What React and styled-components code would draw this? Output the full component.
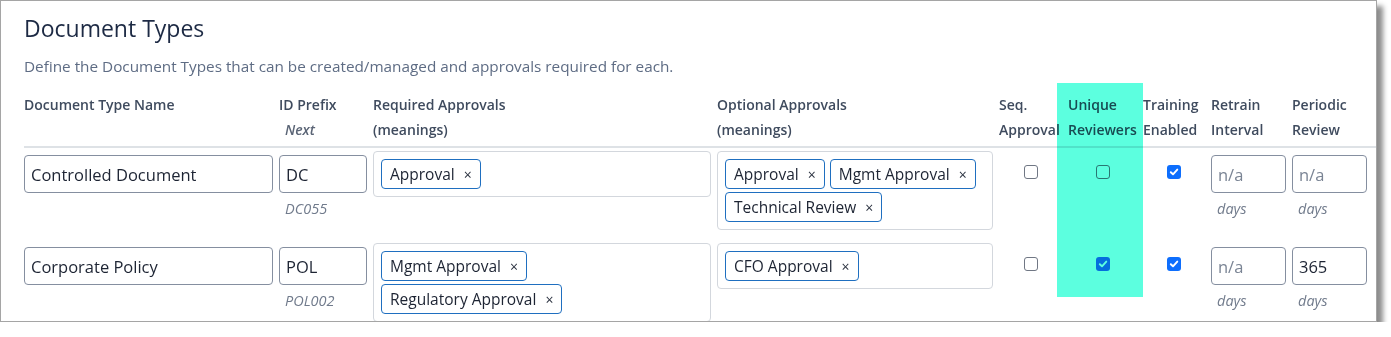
import React from "react";
import styled, { createGlobalStyle } from "styled-components";

const GlobalStyle = createGlobalStyle`
  body {
    margin: 0;
    background: #ffffff;
    font-family: "Open Sans", "Noto Sans", sans-serif;
  }
`;

const COLUMNS = "249px 88px 338px 276px 63px 69px 62px 75px 75px";

const Frame = styled.div`
  position: relative;
  box-sizing: border-box;
  width: 1377px;
  height: 322px;
  padding: 0 0 0 23px;
  border: 1px solid #a5a5a5;
  background: #ffffff;
  box-shadow: 6px 6px 5px rgba(0, 0, 0, 0.45);
  overflow: hidden;
`;

const Title = styled.h2`
  margin: 0;
  padding-top: 12px;
  font-size: 23px;
  font-weight: 400;
  line-height: 30px;
  color: #1d2a44;
`;

const Subtitle = styled.p`
  margin: 12px 0 0;
  font-size: 15.3px;
  line-height: 22px;
  color: #5e6c84;
`;

const HeaderGrid = styled.div`
  display: grid;
  grid-template-columns: ${COLUMNS};
  column-gap: 6px;
  margin-top: 15px;
  padding-bottom: 4px;
  border-bottom: 2px solid #dee2e6;
`;

const HeaderCell = styled.div`
  font-size: 14px;
  font-weight: 600;
  line-height: 25px;
  color: #3f4b5e;
  white-space: nowrap;
`;

const HeaderNote = styled.div`
  padding-left: 6px;
  font-style: italic;
  color: #5b6576;
`;

const Row = styled.div`
  display: grid;
  grid-template-columns: ${COLUMNS};
  column-gap: 6px;
  align-items: start;
  padding: 3px 0 10px;
`;

const Cell = styled.div`
  display: flex;
  flex-direction: column;
  align-items: ${(p) => (p.$center ? "center" : "stretch")};
  padding-top: ${(p) => (p.$center ? "14px" : "4px")};
`;

const TextInput = styled.input`
  box-sizing: border-box;
  width: 100%;
  height: 38px;
  margin: 0;
  padding: 0 6px;
  border: 1px solid #858fa0;
  border-radius: 4px;
  font-family: inherit;
  font-size: 16.5px;
  color: #1d2433;
  background: #ffffff;
  outline: none;

  &::placeholder {
    color: #7a8494;
  }
`;

const Hint = styled.div`
  padding-left: 6px;
  margin-top: 4px;
  font-size: 14.5px;
  font-style: italic;
  line-height: 24px;
  color: #717b8c;
`;

const TagBox = styled.div`
  display: flex;
  flex-wrap: wrap;
  gap: 3px 5px;
  align-content: flex-start;
  box-sizing: border-box;
  padding: 7px;
  border: 1px solid #d3d7dd;
  border-radius: 4px;
  background: #ffffff;
`;

const Tag = styled.span`
  display: inline-flex;
  align-items: center;
  box-sizing: border-box;
  height: 30px;
  padding: 0 8px;
  border: 1px solid #1f6fc0;
  border-radius: 4px;
  font-size: 15.5px;
  color: #1d2433;
  white-space: nowrap;
`;

const Remove = styled.span`
  margin-left: 9px;
  font-size: 14px;
  color: #2b3240;
`;

const Box = styled.span`
  box-sizing: border-box;
  display: inline-flex;
  align-items: center;
  justify-content: center;
  width: 14px;
  height: 14px;
  border-radius: 3px;
  border: ${(p) => (p.$checked ? "none" : "1px solid #707784")};
  background: ${(p) => (p.$checked ? "#0d6efd" : "#ffffff")};
`;

const Highlight = styled.div`
  position: absolute;
  left: 1056px;
  top: 82px;
  width: 86px;
  height: 214px;
  background: #5cffdf;
  mix-blend-mode: multiply;
  pointer-events: none;
`;

const Checkbox = ({ checked }) => (
  <Box $checked={checked}>
    {checked && (
      <svg width="10" height="10" viewBox="0 0 10 10">
        <path d="M1.8 5.2 L4 7.3 L8.3 2.6" fill="none" stroke="#ffffff" strokeWidth="1.9" strokeLinecap="round" strokeLinejoin="round" />
      </svg>
    )}
  </Box>
);

const headers = [
  ["Document Type Name"],
  ["ID Prefix", "Next"],
  ["Required Approvals", "(meanings)"],
  ["Optional Approvals", "(meanings)"],
  ["Seq.", "Approval"],
  ["Unique", "Reviewers"],
  ["Training", "Enabled"],
  ["Retrain", "Interval"],
  ["Periodic", "Review"],
];

const docTypes = [
  {
    name: "Controlled Document",
    prefix: "DC",
    next: "DC055",
    required: ["Approval"],
    optional: ["Approval", "Mgmt Approval", "Technical Review"],
    seq: false,
    unique: false,
    training: true,
    retrain: "",
    review: "",
  },
  {
    name: "Corporate Policy",
    prefix: "POL",
    next: "POL002",
    required: ["Mgmt Approval", "Regulatory Approval"],
    optional: ["CFO Approval"],
    seq: false,
    unique: true,
    training: true,
    retrain: "",
    review: "365",
  },
];

const Tags = ({ items }) => (
  <TagBox>
    {items.map((t) => (
      <Tag key={t}>
        {t}
        <Remove>×</Remove>
      </Tag>
    ))}
  </TagBox>
);

export default function App() {
  return (
    <>
      <GlobalStyle />
      <Frame>
        <Title>Document Types</Title>
        <Subtitle>Define the Document Types that can be created/managed and approvals required for each.</Subtitle>
        <HeaderGrid>
          {headers.map(([top, bottom], i) => (
            <HeaderCell key={top}>
              <div>{top}</div>
              {i === 1 ? <HeaderNote>{bottom}</HeaderNote> : <div>{bottom || "\u00a0"}</div>}
            </HeaderCell>
          ))}
        </HeaderGrid>
        {docTypes.map((d) => (
          <Row key={d.name}>
            <Cell>
              <TextInput readOnly defaultValue={d.name} />
            </Cell>
            <Cell>
              <TextInput readOnly defaultValue={d.prefix} />
              <Hint>{d.next}</Hint>
            </Cell>
            <Tags items={d.required} />
            <Tags items={d.optional} />
            <Cell $center>
              <Checkbox checked={d.seq} />
            </Cell>
            <Cell $center>
              <Checkbox checked={d.unique} />
            </Cell>
            <Cell $center>
              <Checkbox checked={d.training} />
            </Cell>
            <Cell>
              <TextInput readOnly placeholder="n/a" defaultValue={d.retrain} />
              <Hint>days</Hint>
            </Cell>
            <Cell>
              <TextInput readOnly placeholder="n/a" defaultValue={d.review} />
              <Hint>days</Hint>
            </Cell>
          </Row>
        ))}
        <Highlight />
      </Frame>
    </>
  );
}
